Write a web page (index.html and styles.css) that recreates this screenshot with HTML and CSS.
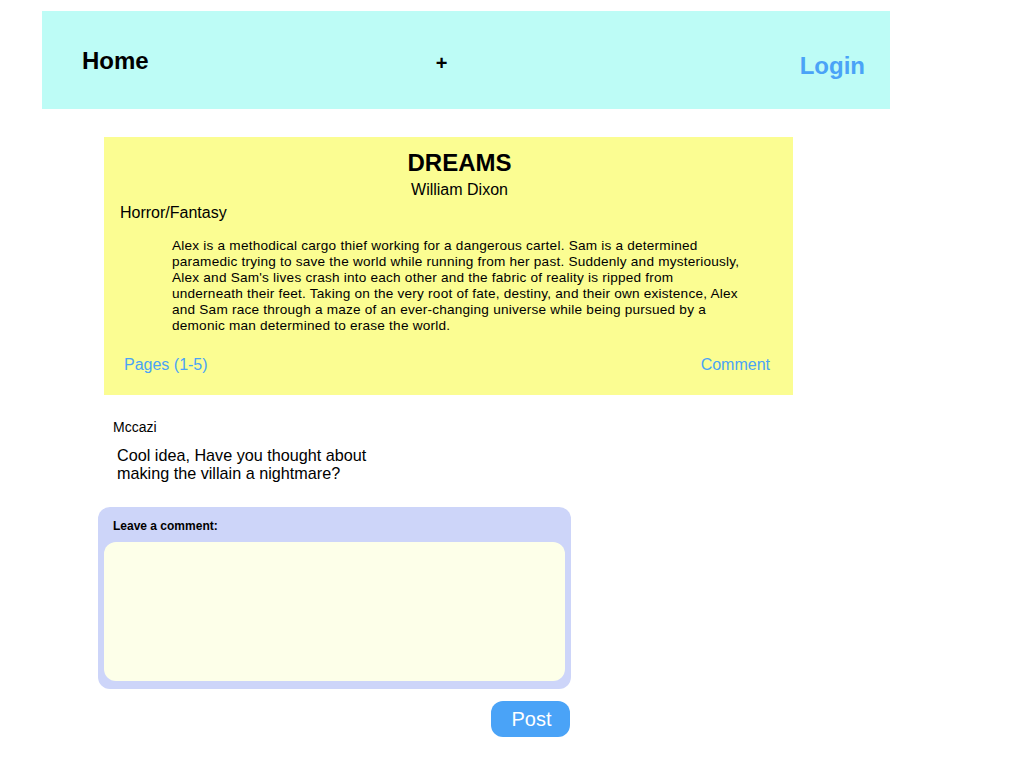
FILE: index.html
```html
<!DOCTYPE html>
<html>
<head>
<meta charset="utf-8">
<link rel="stylesheet" href="styles.css">
</head>
<body>
<div class="page">
  <header class="topbar">
    <a class="nav-home">Home</a>
    <a class="nav-add">+</a>
    <a class="nav-login">Login</a>
  </header>

  <section class="story">
    <h1 class="story-title">DREAMS</h1>
    <div class="story-author">William Dixon</div>
    <div class="story-genre">Horror/Fantasy</div>
    <p class="story-summary">Alex is a methodical cargo thief working for a dangerous cartel. Sam is a determined paramedic trying to save the world while running from her past. Suddenly and mysteriously, Alex and Sam's lives crash into each other and the fabric of reality is ripped from underneath their feet. Taking on the very root of fate, destiny, and their own existence, Alex and Sam race through a maze of an ever-changing universe while being pursued by a demonic man determined to erase the world.</p>
    <div class="story-links">
      <a class="link">Pages (1-5)</a>
      <a class="link">Comment</a>
    </div>
  </section>

  <section class="comment">
    <div class="comment-user">Mccazi</div>
    <div class="comment-text">Cool idea, Have you thought about<br>making the villain a nightmare?</div>
  </section>

  <form class="reply">
    <div class="reply-box">
      <label class="reply-label">Leave a comment:</label>
      <textarea class="reply-input"></textarea>
    </div>
    <div class="reply-actions">
      <button type="button" class="post-btn">Post</button>
    </div>
  </form>
</div>
</body>
</html>
```

FILE: styles.css
```css
* { box-sizing: border-box; }
html, body { margin: 0; padding: 0; background: #ffffff; }
body {
  font-family: "Liberation Sans", Arial, sans-serif;
  color: #000;
}
.page {
  padding: 11px 0 0 42px;
}
.topbar {
  width: 848px;
  height: 98px;
  background: #bdfcf6;
  display: flex;
  align-items: center;
  padding: 0 25px 0 40px;
}
.nav-home {
  font-size: 24px;
  font-weight: bold;
  margin-top: 2px;
}
.nav-add {
  font-size: 20px;
  font-weight: bold;
  margin-left: 287px;
  margin-top: 7px;
}
.nav-login {
  margin-left: auto;
  font-size: 24px;
  font-weight: bold;
  color: #4aa3f7;
  margin-top: 11px;
}
.story {
  margin: 28px 0 0 62px;
  width: 689px;
  height: 258px;
  background: #fbfd92;
  padding: 13px 23px 0 16px;
}
.story-title {
  margin: 0;
  font-size: 24px;
  line-height: 26px;
  font-weight: bold;
  text-align: center;
  padding-left: 29px;
}
.story-author {
  margin-top: 4px;
  font-size: 16px;
  line-height: 20px;
  text-align: center;
  padding-left: 29px;
}
.story-genre {
  margin-top: 3px;
  font-size: 16px;
  line-height: 20px;
}
.story-summary {
  margin: 15px 0 0 52px;
  width: 573px;
  font-size: 13.6px;
  letter-spacing: 0.22px;
  line-height: 16px;
}
.story-links {
  margin-top: 21px;
  display: flex;
  justify-content: space-between;
  padding-left: 4px;
}
.link {
  font-size: 16px;
  line-height: 20px;
  color: #4aa3f7;
}
.comment {
  margin: 24px 0 0 71px;
}
.comment-user {
  font-size: 14px;
  line-height: 16px;
}
.comment-text {
  margin: 11px 0 0 4px;
  font-size: 16.2px;
  line-height: 18px;
}
.reply {
  margin: 25px 0 0 56px;
  width: 473px;
}
.reply-box {
  background: #cdd5f9;
  border-radius: 12px;
  padding: 12px 6px 8px 6px;
  display: flex;
  flex-direction: column;
}
.reply-label {
  font-size: 12px;
  line-height: 14px;
  font-weight: bold;
  padding-left: 9px;
}
.reply-input {
  margin-top: 9px;
  height: 139px;
  width: 100%;
  background: #fdffe9;
  border: none;
  border-radius: 12px;
  resize: none;
  outline: none;
}
.reply-actions {
  display: flex;
  justify-content: flex-end;
  margin-top: 12px;
  padding-right: 1px;
}
.post-btn {
  width: 79px;
  height: 36px;
  background: #4aa3f7;
  color: #fff;
  border: none;
  border-radius: 12px;
  font-family: "Liberation Sans", Arial, sans-serif;
  font-size: 20px;
  padding: 0 0 0 2px;
}
```
